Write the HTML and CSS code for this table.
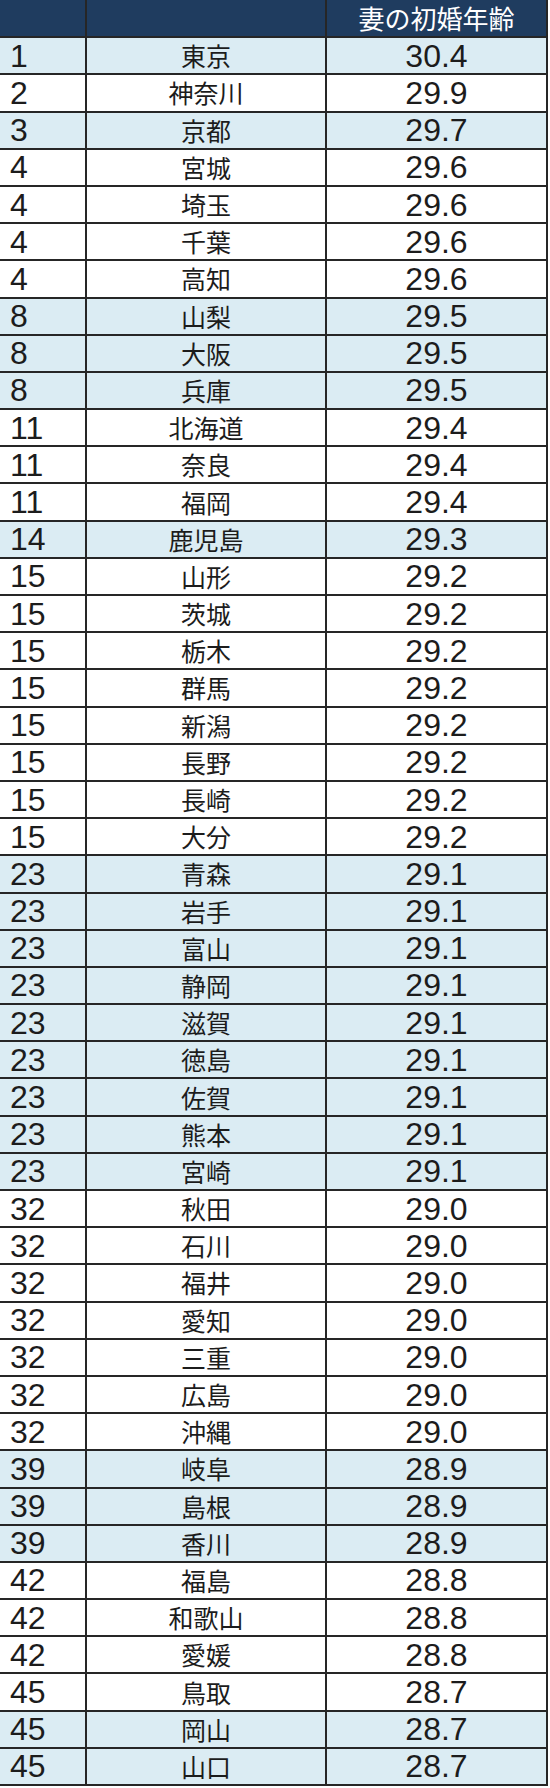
FILE: index.html
```html
<!DOCTYPE html>
<html lang="ja">
<head>
<meta charset="utf-8">
<link rel="stylesheet" href="styles.css">
</head>
<body>
<table class="rank-table">
<thead>
<tr class="head"><th class="c-rank"></th><th class="c-pref"></th><th class="c-val">妻の初婚年齢</th></tr>
</thead>
<tbody>
<tr class="blue"><td class="c-rank">1</td><td class="c-pref">東京</td><td class="c-val">30.4</td></tr>
<tr><td class="c-rank">2</td><td class="c-pref">神奈川</td><td class="c-val">29.9</td></tr>
<tr class="blue"><td class="c-rank">3</td><td class="c-pref">京都</td><td class="c-val">29.7</td></tr>
<tr><td class="c-rank">4</td><td class="c-pref">宮城</td><td class="c-val">29.6</td></tr>
<tr><td class="c-rank">4</td><td class="c-pref">埼玉</td><td class="c-val">29.6</td></tr>
<tr><td class="c-rank">4</td><td class="c-pref">千葉</td><td class="c-val">29.6</td></tr>
<tr><td class="c-rank">4</td><td class="c-pref">高知</td><td class="c-val">29.6</td></tr>
<tr class="blue"><td class="c-rank">8</td><td class="c-pref">山梨</td><td class="c-val">29.5</td></tr>
<tr class="blue"><td class="c-rank">8</td><td class="c-pref">大阪</td><td class="c-val">29.5</td></tr>
<tr class="blue"><td class="c-rank">8</td><td class="c-pref">兵庫</td><td class="c-val">29.5</td></tr>
<tr><td class="c-rank">11</td><td class="c-pref">北海道</td><td class="c-val">29.4</td></tr>
<tr><td class="c-rank">11</td><td class="c-pref">奈良</td><td class="c-val">29.4</td></tr>
<tr><td class="c-rank">11</td><td class="c-pref">福岡</td><td class="c-val">29.4</td></tr>
<tr class="blue"><td class="c-rank">14</td><td class="c-pref">鹿児島</td><td class="c-val">29.3</td></tr>
<tr><td class="c-rank">15</td><td class="c-pref">山形</td><td class="c-val">29.2</td></tr>
<tr><td class="c-rank">15</td><td class="c-pref">茨城</td><td class="c-val">29.2</td></tr>
<tr><td class="c-rank">15</td><td class="c-pref">栃木</td><td class="c-val">29.2</td></tr>
<tr><td class="c-rank">15</td><td class="c-pref">群馬</td><td class="c-val">29.2</td></tr>
<tr><td class="c-rank">15</td><td class="c-pref">新潟</td><td class="c-val">29.2</td></tr>
<tr><td class="c-rank">15</td><td class="c-pref">長野</td><td class="c-val">29.2</td></tr>
<tr><td class="c-rank">15</td><td class="c-pref">長崎</td><td class="c-val">29.2</td></tr>
<tr><td class="c-rank">15</td><td class="c-pref">大分</td><td class="c-val">29.2</td></tr>
<tr class="blue"><td class="c-rank">23</td><td class="c-pref">青森</td><td class="c-val">29.1</td></tr>
<tr class="blue"><td class="c-rank">23</td><td class="c-pref">岩手</td><td class="c-val">29.1</td></tr>
<tr class="blue"><td class="c-rank">23</td><td class="c-pref">富山</td><td class="c-val">29.1</td></tr>
<tr class="blue"><td class="c-rank">23</td><td class="c-pref">静岡</td><td class="c-val">29.1</td></tr>
<tr class="blue"><td class="c-rank">23</td><td class="c-pref">滋賀</td><td class="c-val">29.1</td></tr>
<tr class="blue"><td class="c-rank">23</td><td class="c-pref">徳島</td><td class="c-val">29.1</td></tr>
<tr class="blue"><td class="c-rank">23</td><td class="c-pref">佐賀</td><td class="c-val">29.1</td></tr>
<tr class="blue"><td class="c-rank">23</td><td class="c-pref">熊本</td><td class="c-val">29.1</td></tr>
<tr class="blue"><td class="c-rank">23</td><td class="c-pref">宮崎</td><td class="c-val">29.1</td></tr>
<tr><td class="c-rank">32</td><td class="c-pref">秋田</td><td class="c-val">29.0</td></tr>
<tr><td class="c-rank">32</td><td class="c-pref">石川</td><td class="c-val">29.0</td></tr>
<tr><td class="c-rank">32</td><td class="c-pref">福井</td><td class="c-val">29.0</td></tr>
<tr><td class="c-rank">32</td><td class="c-pref">愛知</td><td class="c-val">29.0</td></tr>
<tr><td class="c-rank">32</td><td class="c-pref">三重</td><td class="c-val">29.0</td></tr>
<tr><td class="c-rank">32</td><td class="c-pref">広島</td><td class="c-val">29.0</td></tr>
<tr><td class="c-rank">32</td><td class="c-pref">沖縄</td><td class="c-val">29.0</td></tr>
<tr class="blue"><td class="c-rank">39</td><td class="c-pref">岐阜</td><td class="c-val">28.9</td></tr>
<tr class="blue"><td class="c-rank">39</td><td class="c-pref">島根</td><td class="c-val">28.9</td></tr>
<tr class="blue"><td class="c-rank">39</td><td class="c-pref">香川</td><td class="c-val">28.9</td></tr>
<tr><td class="c-rank">42</td><td class="c-pref">福島</td><td class="c-val">28.8</td></tr>
<tr><td class="c-rank">42</td><td class="c-pref">和歌山</td><td class="c-val">28.8</td></tr>
<tr><td class="c-rank">42</td><td class="c-pref">愛媛</td><td class="c-val">28.8</td></tr>
<tr><td class="c-rank">45</td><td class="c-pref">鳥取</td><td class="c-val">28.7</td></tr>
<tr class="blue"><td class="c-rank">45</td><td class="c-pref">岡山</td><td class="c-val">28.7</td></tr>
<tr class="blue"><td class="c-rank">45</td><td class="c-pref">山口</td><td class="c-val">28.7</td></tr>
</tbody>
</table>
</body>
</html>
```
FILE: styles.css
```css
html, body {
  margin: 0;
  padding: 0;
  background: #ffffff;
}

.rank-table {
  border-collapse: collapse;
  width: 548px;
  table-layout: fixed;
  font-family: "Liberation Sans", "Noto Sans CJK JP", sans-serif;
  font-size: 32px;
  color: #1c1c1c;
}

.rank-table th,
.rank-table td {
  border: 2px solid #262626;
  padding: 0;
  height: 35.2px;
  line-height: 1;
  white-space: nowrap;
}

.rank-table tr {
  height: 37.2px;
}

.head th {
  background: #1f3c5f;
  color: #ffffff;
  font-weight: normal;
  font-family: "Noto Sans CJK JP", sans-serif;
  font-size: 26px;
  border-top: none;
  border-left: none;
}

.head th:last-child {
  border-right: 2px solid #262626;
}

.blue td {
  background: #dbecf3;
}

.c-rank {
  width: 75px;
  text-align: left;
  padding-left: 10px !important;
}

.rank-table td.c-rank {
  border-left: none;
}

.c-pref {
  width: 238px;
  text-align: center;
}

.rank-table td.c-pref {
  font-family: "Noto Sans CJK JP", sans-serif;
  font-size: 25px;
}

.c-val {
  text-align: center;
}
```
